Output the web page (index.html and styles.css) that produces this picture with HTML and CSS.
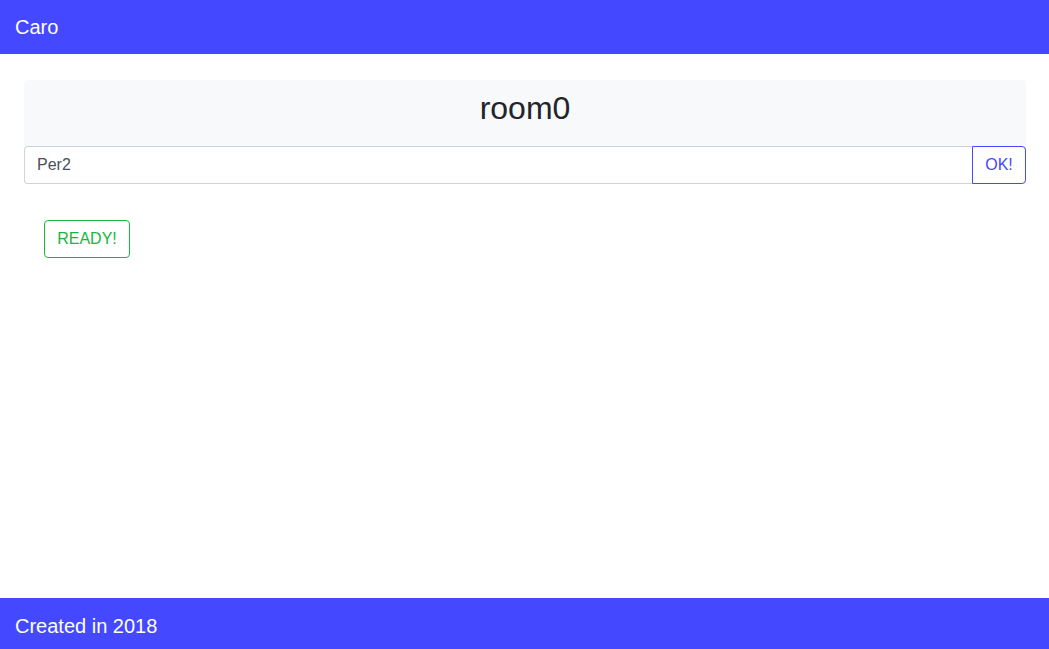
FILE: index.html
```html
<!DOCTYPE html>
<html>
<head>
<meta charset="utf-8">
<link rel="stylesheet" href="styles.css">
</head>
<body>
<header class="topbar">Caro</header>
<main class="content">
  <div class="room-box">
    <h1 class="room-title">room0</h1>
  </div>
  <div class="input-group">
    <input class="name-input" type="text" value="Per2">
    <button class="ok-btn">OK!</button>
  </div>
  <div class="actions">
    <button class="ready-btn">READY!</button>
  </div>
</main>
<footer class="bottombar">Created in 2018</footer>
</body>
</html>
```
FILE: styles.css
```css
* { box-sizing: border-box; }
html, body { height: 100%; }
body {
  margin: 0;
  font-family: "Liberation Sans", Arial, sans-serif;
  color: #212529;
  background: #fff;
  display: flex;
  flex-direction: column;
}
.topbar {
  height: 54px;
  background: #4448ff;
  color: #fff;
  font-size: 20px;
  display: flex;
  align-items: center;
  padding-left: 15px;
  flex-shrink: 0;
}
.content {
  flex: 1;
  padding: 26px 23px 0 24px;
}
.room-box {
  background: #f8f9fa;
  border-radius: 4px 4px 0 0;
  height: 66px;
  display: flex;
  align-items: center;
  justify-content: center;
}
.room-title {
  margin: 0;
  font-size: 32px;
  font-weight: 400;
  line-height: 1.2;
  padding-bottom: 10px;
}
.input-group {
  display: flex;
  height: 38px;
}
.name-input {
  flex: 1;
  border: 1px solid #ced4da;
  border-right: none;
  border-radius: 4px 0 0 4px;
  padding: 6px 12px;
  font-family: inherit;
  font-size: 16px;
  color: #495057;
  outline: none;
}
.ok-btn {
  width: 54px;
  border: 1px solid #4448ff;
  border-radius: 0 4px 4px 0;
  background: #fff;
  color: #4448ff;
  font-family: inherit;
  font-size: 16px;
  padding: 0;
}
.actions {
  padding: 36px 0 0 20px;
}
.ready-btn {
  height: 38px;
  width: 86px;
  border: 1px solid #14b83e;
  border-radius: 4px;
  background: #fff;
  color: #14b83e;
  font-family: inherit;
  font-size: 16px;
  padding: 0;
}
.bottombar {
  height: 51px;
  background: #4448ff;
  color: #fff;
  font-size: 20px;
  display: flex;
  align-items: center;
  padding-left: 15px;
  padding-top: 6px;
  flex-shrink: 0;
}
```
